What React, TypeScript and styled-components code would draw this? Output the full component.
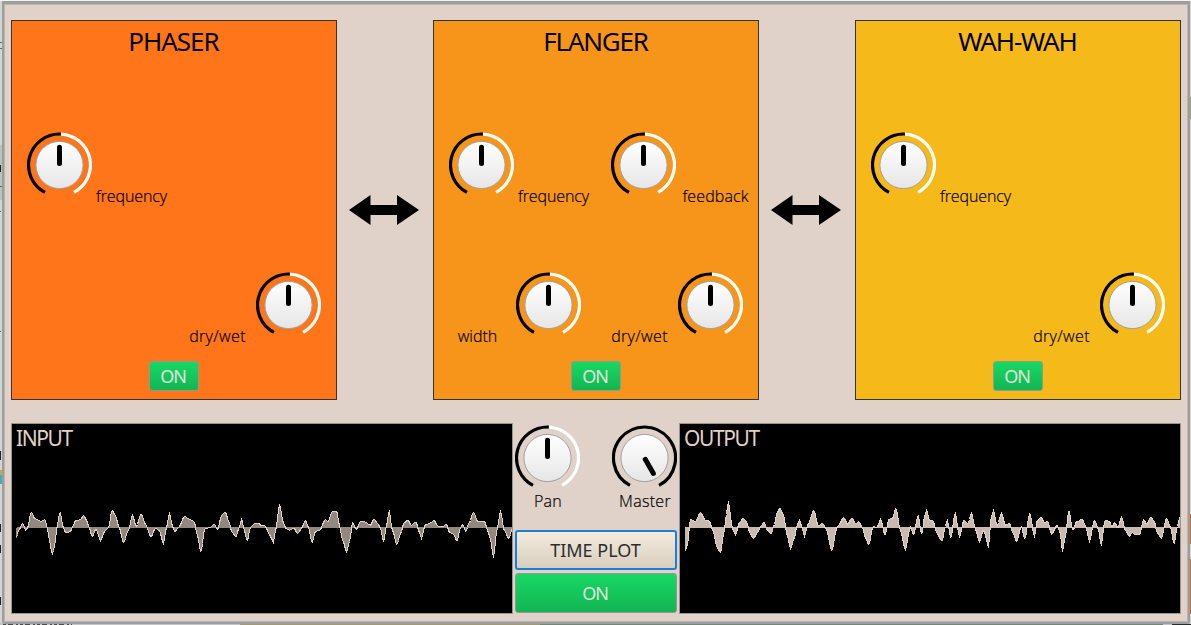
import React from "react";
import styled, { createGlobalStyle } from "styled-components";

const Global = createGlobalStyle`
  * { box-sizing: border-box; }
  html, body { margin: 0; padding: 0; }
  body { background: #d3d4d3; overflow: hidden; }
`;

const Desktop = styled.div`
  position: relative;
  width: 1191px;
  height: 625px;
  padding: 1px 0 1px 2px;
  overflow: hidden;
  background: linear-gradient(#f0f3f4 0 1px, #d3d4d3 1px 623px, #c4c5c2 623px);
  font-family: "Noto Sans", "Open Sans", sans-serif;
`;

const Backdrop = styled.svg`
  position: absolute;
  left: 0;
  top: 0;
`;

const Window = styled.main`
  position: relative;
  width: 1188px;
  height: 623px;
  border: 2px solid #9c9e9d;
  border-top-width: 3px;
  border-bottom-width: 2px;
  border-radius: 0 0 3px 3px;
  background: #e0d2c9;
  box-shadow: inset 0 0 0 1px #b8b5b2;
  padding: 16px 7px 0;
`;

const EffectsRow = styled.section`
  display: flex;
  align-items: center;
  height: 380px;
`;

const Panel = styled.article<{ $color: string }>`
  display: flex;
  flex-direction: column;
  align-items: center;
  width: 326px;
  height: 380px;
  border: 1px solid #333;
  background: ${(p) => p.$color};
`;

const Title = styled.h2<{ $tracking: number }>`
  margin: 0;
  height: 111px;
  padding: 2px 1px 0 0;
  font-size: 26px;
  line-height: 36px;
  font-weight: 400;
  letter-spacing: ${(p) => p.$tracking}px;
  color: #000;
`;

const KnobRow = styled.div<{ $end?: boolean }>`
  display: flex;
  align-self: stretch;
  justify-content: ${(p) => (p.$end ? "flex-end" : "flex-start")};
  gap: 19px;
  height: ${(p) => (p.$end ? 89 : 140)}px;
  padding: 0 ${(p) => (p.$end ? 15 : 0)}px 0 ${(p) => (p.$end ? 0 : 15)}px;
`;

const KnobCell = styled.div<{ $reverse?: boolean }>`
  display: flex;
  flex-direction: ${(p) => (p.$reverse ? "row-reverse" : "row")};
  width: 143px;
  height: 76px;
`;

const SideLabel = styled.span<{ $tracking: number }>`
  width: 78px;
  padding: 52px 0 0 1px;
  text-align: center;
  font-family: "Open Sans", "Noto Sans", sans-serif;
  font-weight: 300;
  font-size: 16px;
  line-height: 24px;
  letter-spacing: ${(p) => p.$tracking}px;
  -webkit-text-stroke: 0.2px #000;
  color: #000;
`;

const KnobSvg = styled.svg`
  display: block;
  flex: none;
`;

const GreenButton = styled.button<{ $large?: boolean }>`
  width: ${(p) => (p.$large ? 162 : 50)}px;
  height: ${(p) => (p.$large ? 40 : 30)}px;
  padding: 0 2px 1px 0;
  border: 1px solid #8f9a93;
  border-radius: 3px;
  background: linear-gradient(#18d864, #12b553);
  color: #e0e4da;
  font: 400 18px/26px "Noto Sans", sans-serif;
  letter-spacing: -1px;
`;

const PlotButton = styled.button`
  width: 162px;
  height: 40px;
  padding: 0 1px 1px 0;
  margin-bottom: 3px;
  border: 2px solid #1b7fd6;
  border-radius: 3px;
  background: linear-gradient(#f4ebdc, #d8cebf);
  color: #2d2d2d;
  font: 400 18px/26px "Noto Sans", sans-serif;
`;

const ArrowSvg = styled.svg`
  display: block;
  flex: none;
  margin: 0 13px 0 12px;
`;

const LowerRow = styled.section`
  display: flex;
  margin-top: 23px;
  height: 191px;
`;

const Scope = styled.div`
  position: relative;
  width: 502px;
  height: 191px;
  border: 1px solid #989492;
  background: #000;
`;

const ScopeTitle = styled.div`
  position: absolute;
  left: 4px;
  top: 0;
  color: #e0d2c9;
  font-size: 21px;
  line-height: 28px;
  letter-spacing: -1.4px;
`;

const WaveSvg = styled.svg`
  display: block;
`;

const Center = styled.div`
  display: flex;
  flex-direction: column;
  align-items: center;
  width: 166px;
  padding-top: 2px;
`;

const MasterKnobs = styled.div`
  display: flex;
  justify-content: space-between;
  width: 162px;
  height: 105px;
`;

const MasterKnob = styled.div`
  display: flex;
  flex-direction: column;
  align-items: center;
  width: 65px;
`;

const MasterLabel = styled.span`
  margin-top: -2px;
  padding-left: 1px;
  font: 300 16px/24px "Open Sans", "Noto Sans", sans-serif;
  letter-spacing: 0.3px;
  -webkit-text-stroke: 0.2px #000;
  color: #000;
`;

const polar = (deg: number, r: number) => {
  const a = (deg * Math.PI) / 180;
  return `${(32.5 + r * Math.sin(a)).toFixed(2)} ${(33 - r * Math.cos(a)).toFixed(2)}`;
};

function Knob({ full = false }: { full?: boolean }) {
  const id = React.useId();
  return (
    <KnobSvg width="65" height="66" viewBox="0 0 65 66">
      <defs>
        <linearGradient id={id} x1="0" y1="0" x2="0" y2="1">
          <stop offset="0" stopColor="#ffffff" />
          <stop offset="1" stopColor="#e6e6e6" />
        </linearGradient>
      </defs>
      <g fill="none" strokeWidth="3.2">
        {!full && <path d={`M${polar(2.5, 31)} A31 31 0 0 1 ${polar(152, 31)}`} stroke="#fff" />}
        <path
          d={
            full
              ? `M${polar(-152, 31)} A31 31 0 1 1 ${polar(152, 31)}`
              : `M${polar(-152, 31)} A31 31 0 0 1 ${polar(2.5, 31)}`
          }
          stroke="#000"
        />
      </g>
      <circle cx="32.5" cy="33" r="23.6" fill={`url(#${id})`} stroke="#a0a0a0" />
      <path
        d="M32.5 15.2V31.5"
        stroke="#000"
        strokeWidth="5"
        strokeLinecap="round"
        transform={full ? "rotate(150 32.5 33)" : undefined}
      />
    </KnobSvg>
  );
}

function Arrow() {
  return (
    <ArrowSvg width="71" height="30" viewBox="0 0 71 30">
      <path d="M0 15 21.5 0V10H48V0L70 15 48 30V20H21.5V30Z" fill="#000" />
    </ArrowSvg>
  );
}

interface EffectProps {
  name: string;
  color: string;
  tracking: number;
  top: string[];
  bottom: string[];
}

function Effect({ name, color, tracking, top, bottom }: EffectProps) {
  return (
    <Panel $color={color}>
      <Title $tracking={tracking}>{name}</Title>
      <KnobRow>
        {top.map((t) => (
          <KnobCell key={t}>
            <Knob />
            <SideLabel $tracking={t === "feedback" ? 0.1 : -0.1}>{t}</SideLabel>
          </KnobCell>
        ))}
      </KnobRow>
      <KnobRow $end>
        {bottom.map((t) => (
          <KnobCell key={t} $reverse>
            <Knob />
            <SideLabel $tracking={t === "width" ? 0 : 0.35}>{t}</SideLabel>
          </KnobCell>
        ))}
      </KnobRow>
      <GreenButton>ON</GreenButton>
    </Panel>
  );
}

// Turning points of each signal, in thirds of a pixel: x from the scope's edge, y with 110 as the zero line.
const INPUT =
  "18,139 24,120 36,97 46,119 52,110 62,64 74,84 92,91 104,86 110,110 117,150 125,190 133,165 139,110 149,64 158,110 166,126 180,122 188,105 194,90 210,87 220,73 228,88 236,110 245,139 256,115 270,149 282,122 294,110 305,58 315,75 326,110 339,155 354,118 366,73 377,107 392,70 405,100 421,138 434,113 446,118 459,157 468,110 477,67 486,106 493,122 505,110 522,76 536,85 551,92 561,135 571,185 583,113 598,111 612,101 621,116 634,72 645,65 655,92 665,126 677,137 686,110 694,86 702,120 710,151 720,110 733,97 746,97 " +
  "750,104 764,105 776,130 789,154 795,120 807,43 820,98 826,113 838,118 850,112 862,128 873,112 885,88 894,110 905,157 915,121 928,118 944,86 953,92 965,62 979,62 987,105 997,150 1008,182 1018,150 1026,94 1037,116 1050,93 1059,92 1080,103 1091,85 1104,102 1111,115 1119,152 1128,105 1136,61 1146,120 1159,161 1172,125 1180,97 1192,88 1203,103 1217,93 1225,120 1233,142 1244,102 1262,96 1271,88 1282,106 1296,108 1308,100 1317,125 1329,130 1340,152 1350,110 1357,100 1366,122 1376,95 1389,64 1402,93 1422,92 1432,120 1440,145 1449,200 1459,120 1470,61 1481,118 1495,143 1506,112";
const OUTPUT =
  "16,182 24,160 33,85 48,93 63,65 78,88 89,90 100,118 113,170 123,185 133,130 138,90 146,34 160,115 168,131 180,95 192,82 203,95 210,125 222,143 236,123 244,105 254,95 264,118 275,129 285,100 293,65 301,52 313,75 322,130 333,173 345,140 354,100 360,88 367,108 375,136 386,100 403,58 416,104 430,98 440,115 457,179 473,108 493,80 504,100 517,82 528,98 538,92 548,108 558,140 568,163 580,107 592,110 603,86 617,134 628,85 639,83 649,52 663,120 678,177 692,110 703,131 716,73 726,128 " +
  "728,128 734,80 741,58 750,88 761,90 771,125 788,151 797,110 803,88 814,143 827,67 840,137 853,88 865,98 876,67 888,115 900,152 913,118 927,167 935,80 942,58 953,105 966,67 978,103 990,97 1001,128 1012,152 1025,105 1036,145 1051,67 1065,137 1073,88 1084,79 1095,94 1105,92 1116,131 1133,103 1142,125 1149,182 1157,140 1168,58 1180,119 1192,92 1208,86 1218,105 1230,152 1245,88 1257,115 1265,163 1276,89 1290,91 1298,109 1306,95 1315,112 1326,80 1338,118 1349,137 1359,124 1365,131 1381,130 1392,86 1402,101 1413,79 1425,92 1432,125 1446,142 1461,82 1473,110 1484,161 1493,110 1502,76";

function sample(data: string): Array<[number, number]> {
  const pts = data.trim().split(/\s+/).map((s) => s.split(",").map(Number));
  const out: Array<[number, number]> = [];
  let k = 0;
  for (let x = Math.ceil(pts[0][0] / 3); x <= 502; x++) {
    const t = x * 3;
    while (k < pts.length - 2 && pts[k + 1][0] < t) k++;
    const [x0, y0] = pts[k];
    const [x1, y1] = pts[k + 1];
    const f = Math.min(1, Math.max(0, (t - x0) / (x1 - x0)));
    const eased = f * 0.15 + 0.85 * f * f * (3 - 2 * f);
    out.push([x, Math.round((y0 + (y1 - y0) * eased - 110) / 3)]);
  }
  return out;
}

function Wave({ data, fill, shift }: { data: string; fill: string; shift: number }) {
  const s = sample(data);
  const zero = 103;
  const line = s.map(([x, y], i) => `${i ? "L" : "M"}${x - shift} ${zero + y + 0.5}`).join("");
  const area = s.map(([x, y]) => `M${x - shift} ${zero + 0.5}V${zero + y + 0.5}`).join("");
  return (
    <WaveSvg width="500" height="189" viewBox="0 0 500 189" shapeRendering="crispEdges" fill="none">
      <path d={area} stroke={fill} />
      <path d={`M${s[0][0] - 1} ${zero + 0.5}H500`} stroke={fill} />
      <path d={line} stroke="#e0d2c9" />
    </WaveSvg>
  );
}

export default function App() {
  return (
    <Desktop>
      <Global />
      <Backdrop width="1191" height="625" viewBox="0 0 1191 625" shapeRendering="crispEdges">
        <path d="M0 145h2v55H0Z" fill="#bfc0bf" />
        <path d="M0 42h2M0 48h2M0 186h2M0 211h1M0 331h1" stroke="#666" />
        <path d="M0 165h1v7H0ZM0 451h1v9H0ZM0 524h1v8H0ZM0 545h1v8H0ZM0 597h1v8H0Z" fill="#222" />
        <path d="M0 470h2v5H0Z" fill="#c6a65d" />
        <path d="M0 475h2v9H0Z" fill="#43acc2" />
        <path d="M1190 97h1v22h-1Z" fill="#91a781" />
        <path d="M1190 514h1v30h-1ZM1190 559h1v55h-1Z" fill="#c8692d" />
        <path d="M3 624.5H72" stroke="#4c4c4c" strokeDasharray="3 2 5 3 2 2" />
        <path d="M240 624h300v1H240Z" fill="#a49a70" />
        <path d="M540 624h623v1H540Z" fill="#718875" />
        <path d="M1172 624h19v1h-19Z" fill="#282d2b" />
      </Backdrop>
      <Window>
        <EffectsRow>
          <Effect name="PHASER" color="#ff761a" tracking={-1} top={["frequency"]} bottom={["dry/wet"]} />
          <Arrow />
          <Effect
            name="FLANGER"
            color="#f7951b"
            tracking={-1.2}
            top={["frequency", "feedback"]}
            bottom={["width", "dry/wet"]}
          />
          <Arrow />
          <Effect name="WAH-WAH" color="#f5b91a" tracking={-1.15} top={["frequency"]} bottom={["dry/wet"]} />
        </EffectsRow>
        <LowerRow>
          <Scope>
            <ScopeTitle>INPUT</ScopeTitle>
            <Wave data={INPUT} fill="#938880" shift={1.5} />
          </Scope>
          <Center>
            <MasterKnobs>
              <MasterKnob>
                <Knob />
                <MasterLabel>Pan</MasterLabel>
              </MasterKnob>
              <MasterKnob>
                <Knob full />
                <MasterLabel>Master</MasterLabel>
              </MasterKnob>
            </MasterKnobs>
            <PlotButton>TIME PLOT</PlotButton>
            <GreenButton $large>ON</GreenButton>
          </Center>
          <Scope>
            <ScopeTitle>OUTPUT</ScopeTitle>
            <Wave data={OUTPUT} fill="#c8bab1" shift={0.5} />
          </Scope>
        </LowerRow>
      </Window>
    </Desktop>
  );
}
